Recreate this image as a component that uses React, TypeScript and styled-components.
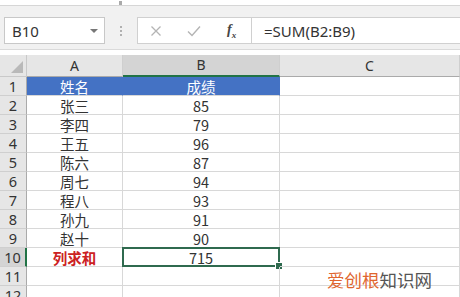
import styled, { createGlobalStyle } from 'styled-components';

const GlobalStyle = createGlobalStyle`
    html, body {
        margin: 0;
        padding: 0;
        background: #ffffff;
        overflow: hidden;
    }
    body {
        font-family: 'Noto Sans CJK SC', 'Noto Sans', sans-serif;
    }
`;

const ROW_H = 19;
const names = ['张三', '李四', '王五', '陈六', '周七', '程八', '孙九', '赵十'];
const scores = [85, 79, 96, 87, 94, 93, 91, 90];

export default function App() {
    return (
        <Page>
            <GlobalStyle />
            <Ribbon>
                <RibbonLabel>数字格式</RibbonLabel>
                <RibbonMark />
            </Ribbon>
            <FormulaBar>
                <NameBox>
                    <span>B10</span>
                    <DropArrow />
                </NameBox>
                <Dots>
                    <i />
                    <i />
                    <i />
                </Dots>
                <FxButtons>
                    <FxIcon>
                        <svg width="12" height="12" viewBox="0 0 12 12">
                            <path d="M1.5 1.5 L10.5 10.5 M10.5 1.5 L1.5 10.5" stroke="#b4b4b4" strokeWidth="1.3" />
                        </svg>
                    </FxIcon>
                    <FxIcon>
                        <svg width="14" height="12" viewBox="0 0 14 12">
                            <path d="M1 6.5 L5 10.5 L13 1.5" stroke="#b4b4b4" strokeWidth="1.4" fill="none" />
                        </svg>
                    </FxIcon>
                    <FxText>
                        f<sub>x</sub>
                    </FxText>
                </FxButtons>
                <FormulaInput>=SUM(B2:B9)</FormulaInput>
            </FormulaBar>
            <Sheet>
                <Corner />
                <ColHead>A</ColHead>
                <ColHead active>B</ColHead>
                <ColHead>C</ColHead>

                <RowHead>1</RowHead>
                <HeadCell>姓名</HeadCell>
                <HeadCell>成绩</HeadCell>
                <Cell />

                {names.map((n, i) => (
                    <Row key={n} n={i + 2} name={n} score={String(scores[i])} />
                ))}

                <RowHead active>10</RowHead>
                <Cell red>列求和</Cell>
                <Cell selected>
                    715
                    <FillHandle />
                </Cell>
                <Cell />

                <RowHead>11</RowHead>
                <Cell />
                <Cell />
                <Cell />

                <RowHead>12</RowHead>
                <Cell />
                <Cell />
                <Cell />
            </Sheet>
            <Watermark>
                <em>爱创根</em>知识网
            </Watermark>
        </Page>
    );
}

const Row = ({ n, name, score }: { n: number; name: string; score: string }) => (
    <>
        <RowHead>{n}</RowHead>
        <Cell>{name}</Cell>
        <Cell>{score}</Cell>
        <Cell />
    </>
);

const Page = styled.div`
    position: relative;
    width: 460px;
    height: 297px;
    overflow: hidden;
`;

const Ribbon = styled.div`
    height: 5px;
    background: #ffffff;
    border-bottom: 1px solid #d6d6d6;
    overflow: hidden;
    display: flex;
    align-items: flex-end;
    padding-left: 31px;
    gap: 40px;
`;

const RibbonLabel = styled.span`
    font-size: 12px;
    line-height: 12px;
    color: #888;
    margin-bottom: -1px;
    transform: translateY(-6px);
    opacity: 0.7;
`;

const RibbonMark = styled.span`
    width: 3px;
    height: 4px;
    background: #aaa;
`;

const FormulaBar = styled.div`
    height: 44px;
    box-sizing: border-box;
    background: #f1f1f1;
    display: flex;
    align-items: flex-start;
    padding: 11px 0 0 4px;
    border-bottom: 1px solid #dadada;
`;

const NameBox = styled.div`
    width: 101px;
    height: 27px;
    box-sizing: border-box;
    background: #fff;
    border: 1px solid #c8c8c8;
    display: flex;
    align-items: center;
    justify-content: space-between;
    padding: 0 6px 0 7px;
    font-family: 'Noto Sans', 'Liberation Sans', sans-serif;
    font-size: 15px;
    color: #333;
`;

const DropArrow = styled.span`
    width: 0;
    height: 0;
    border-left: 4px solid transparent;
    border-right: 4px solid transparent;
    border-top: 4px solid #777;
`;

const Dots = styled.div`
    width: 32px;
    height: 27px;
    display: flex;
    flex-direction: column;
    align-items: center;
    justify-content: center;
    gap: 2px;

    i {
        width: 2px;
        height: 2px;
        background: #b0b0b0;
    }
`;

const FxButtons = styled.div`
    width: 114px;
    height: 27px;
    box-sizing: border-box;
    background: #fff;
    border: 1px solid #d0d0d0;
    border-right: none;
    display: flex;
    align-items: center;
    padding-left: 11px;
    gap: 24px;
`;

const FxIcon = styled.span`
    display: flex;
    width: 14px;
    justify-content: center;
`;

const FxText = styled.span`
    font-family: 'Liberation Serif', serif;
    font-style: italic;
    font-weight: bold;
    font-size: 14px;
    color: #444;
    margin-left: 2px;

    sub {
        font-size: 9px;
    }
`;

const FormulaInput = styled.div`
    flex: 1;
    height: 27px;
    box-sizing: border-box;
    background: #fff;
    border: 1px solid #d0d0d0;
    border-right: none;
    display: flex;
    align-items: center;
    padding-left: 12px;
    font-family: 'Noto Sans', 'Liberation Sans', sans-serif;
    font-size: 15px;
    color: #333;
`;

const Sheet = styled.div`
    display: grid;
    grid-template-columns: 27px 96px 157px 1fr;
    grid-template-rows: 22px repeat(12, ${ROW_H}px);
    margin-top: 5px;
    font-size: 14.5px;
    color: #333;
`;

const Corner = styled.div`
    position: relative;
    background: #e6e6e6;
    border-right: 1px solid #c9c9c9;
    border-bottom: 1px solid #c9c9c9;

    &::after {
        content: '';
        position: absolute;
        right: 3px;
        bottom: 3px;
        border-left: 12px solid transparent;
        border-bottom: 12px solid #b9b9b9;
    }
`;

const ColHead = styled.div<{ active?: boolean }>`
    background: ${({ active }) => (active ? '#d4d4d4' : '#e6e6e6')};
    border-right: 1px solid #cfcfcf;
    border-bottom: ${({ active }) => (active ? '2px solid #217346' : '1px solid #aaaaaa')};
    display: flex;
    align-items: flex-end;
    justify-content: center;
    font-family: 'Noto Sans', 'Liberation Sans', sans-serif;
    font-size: 14px;
    line-height: 20px;
    color: #333;
`;

const RowHead = styled.div<{ active?: boolean }>`
    background: ${({ active }) => (active ? '#d4d4d4' : '#e6e6e6')};
    border-right: ${({ active }) => (active ? '2px solid #217346' : '1px solid #aaaaaa')};
    border-bottom: 1px solid #cfcfcf;
    display: flex;
    align-items: center;
    justify-content: center;
    font-family: 'Noto Sans', 'Liberation Sans', sans-serif;
    font-size: 14.5px;
    color: #333;
`;

const Cell = styled.div<{ red?: boolean; selected?: boolean }>`
    position: relative;
    border-right: 1px solid #d8d8d8;
    border-bottom: 1px solid #d8d8d8;
    display: flex;
    align-items: center;
    justify-content: center;
    color: ${({ red }) => (red ? '#cc2222' : '#333')};
    font-weight: ${({ red }) => (red ? 'bold' : 'normal')};
    white-space: nowrap;

    ${({ selected }) =>
        selected &&
        `
        &::before {
            content: '';
            position: absolute;
            left: -1px;
            top: -1px;
            right: -1px;
            bottom: -1px;
            border: 2px solid #2f6a4f;
        }
    `}
`;

const HeadCell = styled(Cell)`
    background: #4472c4;
    color: #ffffff;
    border-right: 1px solid #4472c4;
    border-bottom: 1px solid #d8d8d8;
`;

const FillHandle = styled.span`
    position: absolute;
    right: -4px;
    bottom: -4px;
    width: 6px;
    height: 6px;
    background: #2f6a4f;
    border: 1px solid #fff;
`;

const Watermark = styled.div`
    position: absolute;
    left: 327px;
    top: 269px;
    font-size: 17.5px;
    line-height: 22px;
    color: #555555;

    em {
        font-style: normal;
        color: #e0652e;
    }
`;
